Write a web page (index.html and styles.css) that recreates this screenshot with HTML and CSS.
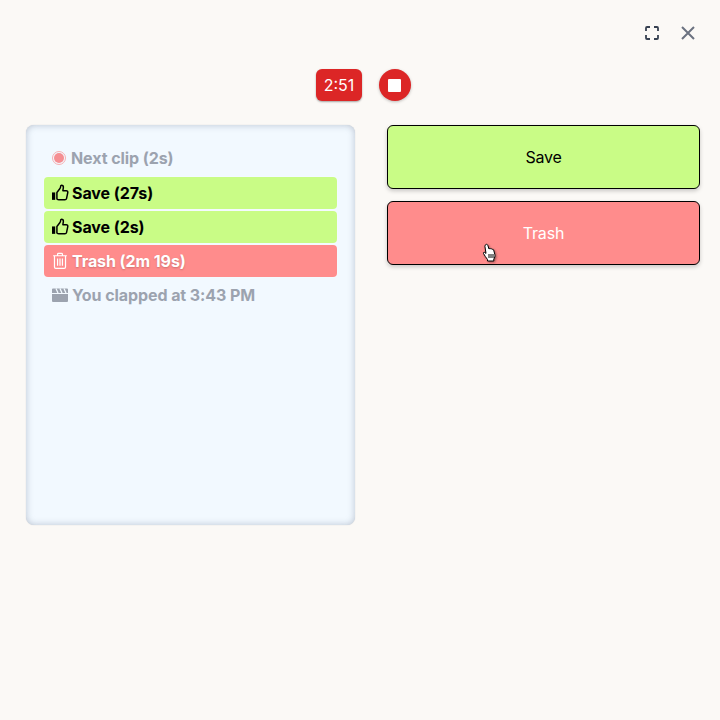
FILE: index.html
```html
<!DOCTYPE html>
<html lang="en">
<head>
    <meta charset="UTF-8">
    <title>Clapper</title>
    <link rel="stylesheet" href="styles.css">
</head>
<body>
    <div class="app">
        <div class="window-bar">
            <button class="icon-btn">
                <svg width="16" height="16" viewBox="0 0 16 16" fill="none" stroke="#374151" stroke-width="1.800">
                    <path d="M2 6V3a1 1 0 0 1 1-1h3M10 2h3a1 1 0 0 1 1 1v3M14 10v3a1 1 0 0 1-1 1h-3M6 14H3a1 1 0 0 1-1-1v-3"/>
                </svg>
            </button>
            <button class="icon-btn">
                <svg width="16" height="16" viewBox="0 0 16 16" fill="none" stroke="#6b7280" stroke-width="2">
                    <path d="M2 2l12 12M14 2L2 14"/>
                </svg>
            </button>
        </div>

        <div class="recorder">
            <div class="timer">2:51</div>
            <div class="stop"><span class="stop-square"></span></div>
        </div>

        <div class="main">
            <div class="panel">
                <div class="row row-muted row-next">
                    <span class="rec-dot"></span>
                    <span>Next clip (2s)</span>
                </div>
                <div class="row row-save">
                    <svg class="row-icon" viewBox="1 1 14 14">
                        <path d="M1 7.500h2.800V14H1z" fill="#000"/>
                        <path d="M5.300 7.500l2.500-3.200c.5-.6.7-1.300.8-2.200 0-.6.400-1 1-.9 1.100.2 1.500 1.200 1.300 2.300L10.500 6h3c.9 0 1.500.8 1.300 1.600l-1.100 5.300c-.2.700-.8 1.100-1.400 1.100H7c-.8 0-1.200-.3-1.700-.8z" fill="none" stroke="#000" stroke-width="1.300" stroke-linejoin="round"/>
                    </svg>
                    <span>Save (27s)</span>
                </div>
                <div class="row row-save">
                    <svg class="row-icon" viewBox="1 1 14 14">
                        <path d="M1 7.500h2.800V14H1z" fill="#000"/>
                        <path d="M5.300 7.500l2.500-3.200c.5-.6.7-1.300.8-2.200 0-.6.400-1 1-.9 1.100.2 1.500 1.200 1.300 2.300L10.500 6h3c.9 0 1.500.8 1.300 1.600l-1.100 5.300c-.2.700-.8 1.100-1.400 1.100H7c-.8 0-1.200-.3-1.700-.8z" fill="none" stroke="#000" stroke-width="1.300" stroke-linejoin="round"/>
                    </svg>
                    <span>Save (2s)</span>
                </div>
                <div class="row row-trash">
                    <svg class="row-icon" viewBox="1 1 14 14.500" fill="none" stroke="#fff" stroke-width="1.100">
                        <path d="M1.800 3.500h12.400M5.800 3.300V2.200c0-.5.400-.8.800-.8h2.800c.4 0 .8.300.8.800v1.100M3 3.500v10.300c0 .7.500 1.200 1.200 1.200h7.600c.7 0 1.200-.5 1.200-1.200V3.500M5.800 6v6.500M8 6v6.500M10.200 6v6.500"/>
                    </svg>
                    <span>Trash (2m 19s)</span>
                </div>
                <div class="row row-muted">
                    <svg class="row-icon" viewBox="0 0 16 16">
                        <path d="M0 7h16v7a1 1 0 0 1-1 1H1a1 1 0 0 1-1-1z" fill="#9ca3af"/>
                        <path d="M1 1.500h14a1 1 0 0 1 1 1V6H0V2.500a1 1 0 0 1 1-1z" fill="#9ca3af"/>
                        <path d="M4 1.500l2 4.500M8 1.500l2 4.500M12 1.500l2 4.500" stroke="#f2f9ff" stroke-width="1.300"/>
                    </svg>
                    <span>You clapped at 3:43 PM</span>
                </div>
            </div>

            <div class="actions">
                <button class="action action-save">Save</button>
                <button class="action action-trash">Trash</button>
            </div>
        </div>

        <svg class="cursor" width="16" height="20" viewBox="0 0 16 20">
            <path d="M5 1.500c.8-.5 1.500 0 1.800.8L8 6l.6-.4c.6-.2 1 0 1.300.4.600-.3 1.100-.2 1.400.3.600-.2 1.100 0 1.300.5l1.200 4.500c.5 2-.1 3.500-1 4.700v2H6.500v-1.500C5 14.500 3.500 12.500 2.500 10.500c-.4-.8.300-1.500 1.100-1.100l1.400 1L3.900 3.200c-.1-.7.400-1.400 1.100-1.700z" fill="#fff" stroke="#000" stroke-width="1"/>
            <path d="M8 11v4M10 11v4M12 11v4" stroke="#000" stroke-width="1"/>
        </svg>
    </div>
</body>
</html>
```

FILE: styles.css
```css
*{
    margin: 0;
    padding: 0;
    box-sizing: border-box;
}

body{
    background: #fbf9f6;
    font-family: "Inter", "Liberation Sans", sans-serif;
}

.app{
    width: 720px;
    height: 720px;
    position: relative;
    padding: 16px 20px 0 26px;
}

.window-bar{
    display: flex;
    justify-content: flex-end;
    gap: 12px;
    height: 34px;
}

.icon-btn{
    width: 24px;
    height: 34px;
    border: none;
    background: none;
    display: flex;
    align-items: center;
    justify-content: center;
}

.recorder{
    display: flex;
    justify-content: center;
    align-items: center;
    gap: 17px;
    height: 32px;
    margin-top: 19px;
    margin-left: 1px;
}

.timer{
    width: 46px;
    height: 32px;
    background: #dc2626;
    color: #fff;
    border-radius: 6px;
    font-size: 16px;
    line-height: 32px;
    text-align: center;
    box-shadow: 0 1px 2px rgba(0,0,0,0.35);
}

.stop{
    width: 32px;
    height: 32px;
    background: #dc2626;
    border-radius: 50%;
    display: flex;
    align-items: center;
    justify-content: center;
    box-shadow: 0 1px 3px rgba(0,0,0,0.25);
}

.stop-square{
    width: 13px;
    height: 13px;
    margin-right: 1px;
    background: #fff;
    border-radius: 1px;
}

.main{
    display: flex;
    gap: 32px;
    margin-top: 24px;
}

.panel{
    width: 329px;
    height: 400px;
    background: #f2f9ff;
    border-radius: 8px;
    padding: 17px 18px;
    display: flex;
    flex-direction: column;
    gap: 2px;
    box-shadow: inset 0 0 7px rgba(100,116,139,0.4), 0 0 1px rgba(100,116,139,0.4);
}

.row{
    height: 32px;
    display: flex;
    align-items: center;
    gap: 4px;
    padding: 0 8px;
    border-radius: 4px;
    font-size: 16px;
    font-weight: 700;
    letter-spacing: -0.08px;
}

.row-next{
    margin-bottom: 1px;
}

.row-icon{
    width: 16px;
    height: 16px;
    flex: none;
    overflow: visible;
}

.row-muted{
    color: #9ca3af;
}

.row-save{
    background: #c9fc86;
    color: #000;
    box-shadow: 0 0 2px rgba(255,255,255,0.8);
}

.row-trash{
    background: #ff8c8c;
    color: #fff;
    box-shadow: 0 0 2px rgba(255,255,255,0.8);
    text-shadow: 0 1px 2px rgba(0,0,0,0.2);
}

.rec-dot{
    width: 14px;
    height: 14px;
    margin-right: 1px;
    padding: 1px;
    background: #f58f93 content-box;
    border: 1px solid #f7b0b3;
    border-radius: 50%;
    flex: none;
}

.actions{
    width: 313px;
    display: flex;
    flex-direction: column;
    gap: 12px;
}

.action{
    height: 64px;
    border: 1px solid #000;
    border-radius: 6px;
    font-family: inherit;
    font-size: 16px;
    letter-spacing: -0.2px;
    box-shadow: 0 2px 4px rgba(0,0,0,0.2);
}

.action-save{
    background: #c9fc86;
    color: #000;
}

.action-trash{
    background: #ff8c8c;
    color: #fff;
}

/* mouse pointer on top of the trash button */
.cursor{
    position: absolute;
    left: 481px;
    top: 243px;
    filter: drop-shadow(1px 1px 1px rgba(0,0,0,0.4));
}
```
